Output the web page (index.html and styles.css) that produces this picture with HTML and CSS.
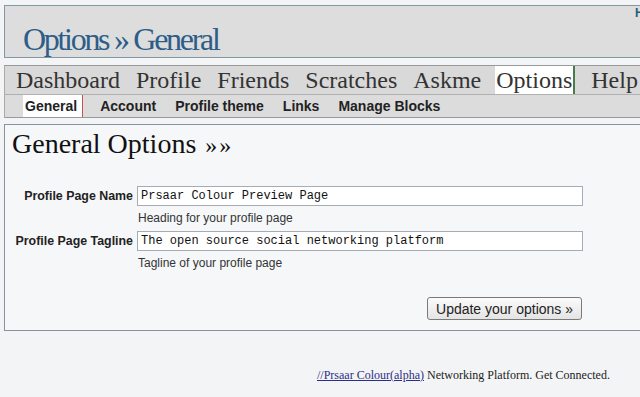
FILE: index.html
```html
<!DOCTYPE html>
<html lang="en">
<head>
<meta charset="UTF-8">
<meta name="viewport" content="width=device-width, initial-scale=1.0">
<title>Options &raquo; General</title>
<link rel="stylesheet" href="styles.css">
</head>
<body>
<div class="page">
    <div class="header">
        <h1 class="title">Options &raquo; General</h1>
        <div class="top-links"><a href="#">Home</a></div>
    </div>

    <div class="nav">
        <a href="#">Dashboard</a>
        <a href="#">Profile</a>
        <a href="#">Friends</a>
        <a href="#">Scratches</a>
        <a href="#">Askme</a>
        <a href="#" class="active">Options</a>
        <a href="#">Help</a>
    </div>
    <div class="subnav">
        <a href="#" class="active">General</a>
        <a href="#">Account</a>
        <a href="#">Profile theme</a>
        <a href="#">Links</a>
        <a href="#">Manage Blocks</a>
    </div>

    <div class="content">
        <h2>General Options <span class="raquo">&raquo;&raquo;</span></h2>
        <form class="options-form" onsubmit="return false;">
            <label for="page-name">Profile Page Name</label>
            <input type="text" id="page-name" value="Prsaar Colour Preview Page">
            <div class="help">Heading for your profile page</div>

            <label for="page-tagline">Profile Page Tagline</label>
            <input type="text" id="page-tagline" value="The open source social networking platform">
            <div class="help">Tagline of your profile page</div>

            <button type="submit">Update your options &raquo;</button>
        </form>
    </div>

    <div class="footer">
        <a href="#">//Prsaar Colour(alpha)</a> Networking Platform. Get Connected.
    </div>
</div>
</body>
</html>
```

FILE: styles.css
```css
html, body {
    margin: 0;
    padding: 0;
    overflow: hidden;
}
body {
    background-color: #f3f4f6;
    font-family: "Liberation Sans", Arial, sans-serif;
    color: #222;
}
.page {
    width: 900px;
    padding: 5px 0 0 4px;
}
a {
    color: inherit;
    text-decoration: none;
}

/* header */
.header {
    display: grid;
    grid-template-columns: 612px 1fr;
    height: 51px;
    padding-left: 18px;
    background-color: #dddddd;
    border: 1px solid #8299a2;
}
.title {
    align-self: end;
    margin: 0;
    font-family: "Liberation Serif", "Times New Roman", serif;
    font-size: 32px;
    font-weight: normal;
    line-height: 36px;
    letter-spacing: -2.3px;
    color: #2d5d88;
}
.top-links {
    font-size: 12px;
    line-height: 14px;
    font-weight: bold;
    color: #1d5f78;
}

/* main navigation */
.nav {
    display: flex;
    gap: 16px;
    margin-top: 7px;
    height: 28px;
    padding-left: 11px;
    background-color: #d9d9d9;
    border-top: 1px solid #999;
    border-left: 1px solid #aaa;
    border-bottom: 1px solid #b0b0b0;
    font-family: "Liberation Serif", "Times New Roman", serif;
    font-size: 24px;
    line-height: 28px;
    color: #333;
}
.nav a.active {
    margin-left: -2px;
    padding: 0 1px;
    background-color: #fff;
    border-right: 2px solid #4a7a4a;
}

.subnav {
    display: flex;
    gap: 16px;
    height: 22px;
    padding-left: 18px;
    background-color: #dcdcdc;
    border-left: 1px solid #aaa;
    border-bottom: 1px solid #999;
    font-size: 14px;
    font-weight: bold;
    line-height: 22px;
    color: #222;
}
.subnav a {
    padding: 0 2px;
}
.subnav a:not(.active) {
    margin-left: -1px;
}
.subnav a.active {
    padding-right: 5px;
    background-color: #fff;
    border-right: 1px solid #c85050;
}

/* content box */
.content {
    margin-top: 6px;
    padding: 3px 0 10px 4px;
    background-color: #f6f7f9;
    border: 1px solid #8a90a2;
}
.content h2 {
    margin: 0 0 25px 3px;
    font-family: "Liberation Serif", "Times New Roman", serif;
    font-size: 28px;
    font-weight: normal;
    line-height: 32px;
    color: #111;
}
.content h2 .raquo {
    font-size: 24px;
    letter-spacing: 2px;
    margin-left: 2px;
}

.options-form {
    display: grid;
    grid-template-columns: 124px 446px;
    column-gap: 4px;
}
.options-form label {
    align-self: center;
    text-align: right;
    white-space: nowrap;
    font-size: 12.4px;
    font-weight: bold;
    color: #222;
}
.options-form input[type="text"] {
    box-sizing: border-box;
    height: 20px;
    width: 446px;
    margin: 0;
    padding: 0 3px;
    background-color: #fff;
    border: 1px solid #a5acb5;
    font-family: "Liberation Mono", "Courier New", monospace;
    font-size: 12px;
    color: #111;
}
.options-form .help {
    grid-column: 2;
    padding: 5px 0 6px 1px;
    font-size: 12px;
    line-height: 14px;
    color: #333;
}
.options-form button {
    grid-column: 2;
    justify-self: end;
    margin: 21px 1px 0 0;
    height: 23px;
    padding: 0 8px;
    background: linear-gradient(#fbfbfb, #e4e4e4);
    border: 1px solid #7a7a7a;
    border-radius: 3px;
    font-family: "Liberation Sans", Arial, sans-serif;
    font-size: 14px;
    color: #222;
    cursor: pointer;
}

/* footer */
.footer {
    margin: 37px 0 0 313px;
    font-family: "Liberation Serif", "Times New Roman", serif;
    font-size: 12px;
    line-height: 15px;
    color: #222;
}
.footer a {
    color: #2b2f86;
    text-decoration: underline;
}
```
